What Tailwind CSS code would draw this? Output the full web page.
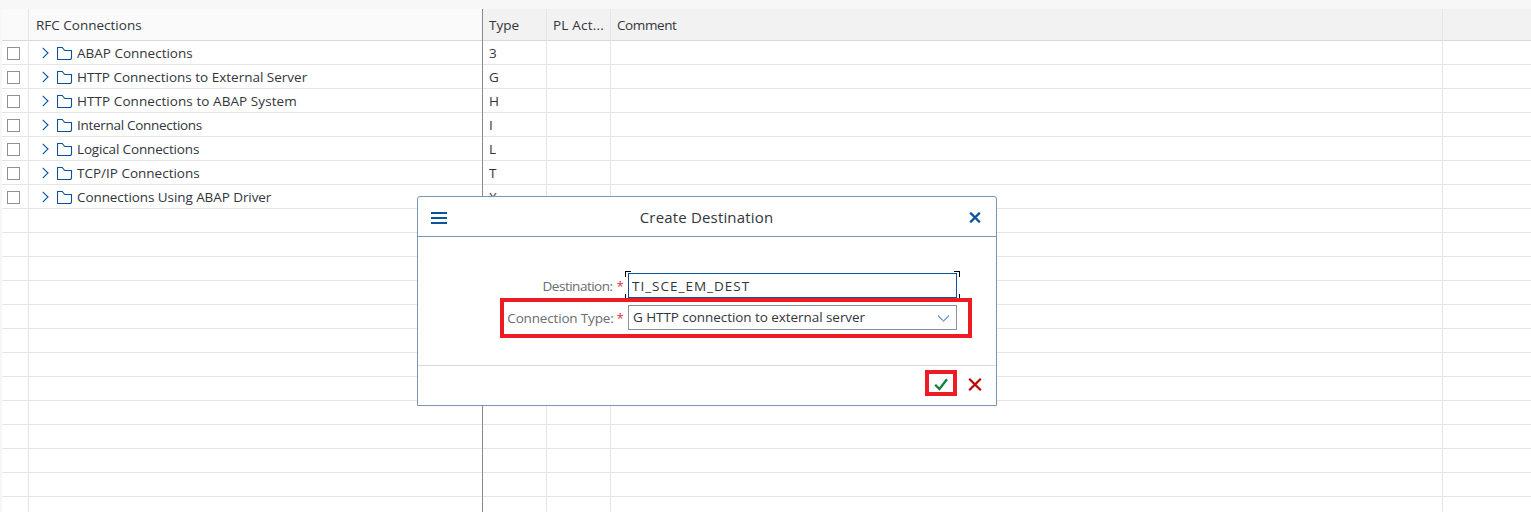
<!DOCTYPE html>
<html lang="en">
<head>
<meta charset="utf-8">
<title>RFC Connections</title>
<script src="https://cdn.jsdelivr.net/npm/@tailwindcss/browser@4"></script>
</head>
<body class="h-[512px] w-[1531px] overflow-hidden bg-[#f7f7f7] font-['Open_Sans',sans-serif] text-[13.5px] text-[#32363a]">
<svg class="hidden">
  <symbol id="chev" viewBox="0 0 8 12"><path d="M1.7 .8 7 6 1.7 11.2" fill="none" stroke="#0854a0" stroke-width="1.1"/></symbol>
  <symbol id="folder" viewBox="0 0 16 14"><path d="M.5 12.5V.5H5.2L7.7 3.5H14.5V11.5L13.5 12.5Z" fill="none" stroke="#0854a0" stroke-width="1.1"/></symbol>
</svg>
<main class="relative h-[512px] overflow-hidden pt-[9px] pl-[2px]">
  <div class="grid h-[32px] grid-cols-[27px_454px_64px_64px_832px_1fr] grid-rows-[32px] bg-[#f2f2f2] leading-[32px] *:shadow-[inset_0_-1px_#d9d9d9]">
    <div class="border-r border-[#e5e5e5] bg-[#fafafa]"></div>
    <div class="border-r border-[#8a8a8a] bg-[#fafafa] pl-[7px]"><span>RFC Connections</span></div>
    <div class="border-r border-[#e5e5e5] pl-[6px]"><span>Type</span></div>
    <div class="border-r border-[#e5e5e5] pl-[6px] tracking-[0.2px] whitespace-nowrap"><span>PL Act...</span></div>
    <div class="border-r border-[#e5e5e5] pl-[6px] tracking-[-0.4px]"><span>Comment</span></div>
    <div></div>
  </div>
  <div id="rows"></div>

  <section class="absolute top-[196px] left-[417px] flex h-[210px] w-[580px] flex-col rounded-t-[3px] border border-[#7996b4] bg-white">
    <header class="flex h-[40px] items-center border-b border-[#7996b4] pr-[15px] pl-[13px]">
      <svg class="mt-[3px] h-[12px] w-[16px]" viewBox="0 0 16 12" fill="#0854a0" shape-rendering="crispEdges"><path d="M0 0H16V2H0ZM0 5H16V7H0ZM0 10H16V12H0Z"/></svg>
      <h1 class="flex-1 pr-[3px] text-center text-[15px] leading-[40px] tracking-[0.17px]"><span>Create Destination</span></h1>
      <svg class="mt-[2px] h-[11px] w-[12px]" viewBox="0 0 12 11"><path d="M1.2.7 10.8 10.3M10.8.7 1.2 10.3" stroke="#0854a0" stroke-width="2.3"/></svg>
    </header>
    <div class="h-[129px] border-b border-[#d9d9d9] pt-[36px]">
      <div class="flex h-[25px]">
        <div class="flex w-[210px] justify-end pr-[4px] leading-[26px] text-[#6a6d70]"><span class="tracking-[-0.5px]">Destination:</span><span class="ml-[4px] text-[#d9363e]">*</span></div>
        <div class="relative w-[329px] border border-[#0854a0] pl-[3px] leading-[24px]"><span class="tracking-[1px]">TI_SCE_EM_DEST</span>
          <i class="absolute -top-[3px] -left-[4px] h-[6px] w-[6px] border-t border-l border-black"></i>
          <i class="absolute -top-[3px] -right-[4px] h-[6px] w-[6px] border-t border-r border-black"></i>
          <i class="absolute -bottom-[3px] -left-[4px] h-[6px] w-[6px] border-b border-l border-black"></i>
          <i class="absolute -right-[4px] -bottom-[3px] h-[6px] w-[6px] border-r border-b border-black"></i>
        </div>
      </div>
      <div class="mt-[7px] flex h-[25px]">
        <div class="flex w-[210px] justify-end pr-[4px] leading-[26px] text-[#6a6d70]"><span class="tracking-[-0.17px]">Connection Type:</span><span class="ml-[3px] text-[#d9363e]">*</span></div>
        <div class="flex w-[329px] items-center justify-between border border-[#89919a] pr-[6px] pl-[4px] leading-[23px]"><span class="tracking-[-0.06px]">G HTTP connection to external server</span>
          <svg class="mt-[1px] h-[7px] w-[13px]" viewBox="0 0 13 7"><path d="M1 .6 6.5 6 12 .6" fill="none" stroke="#0854a0" stroke-width="1"/></svg>
        </div>
      </div>
    </div>
    <footer class="flex flex-1 items-center justify-end gap-[19px] pr-[14px] pb-[2px]">
      <svg class="h-[13px] w-[15px]" viewBox="0 0 15 13"><path d="M1.2 6.7 5.4 11 13 1.3" fill="none" stroke="#107e3e" stroke-width="2.3"/></svg>
      <svg class="h-[13px] w-[14px]" viewBox="0 0 14 13"><path d="M1.2 .8 12.8 12.2M12.8.8 1.2 12.2" stroke="#bb0000" stroke-width="2.2"/></svg>
    </footer>
  </section>
  <div class="absolute top-[298px] left-[500px] h-[40px] w-[472px] border-4 border-[#ed1c24]"></div>
  <div class="absolute top-[370px] left-[925px] h-[26px] w-[32px] border-4 border-[#ed1c24]"></div>
</main>
<script>
const data = [
  ["ABAP Connections","3",""],
  ["HTTP Connections to External Server","G",""],
  ["HTTP Connections to ABAP System","H","tracking-[0.07px]"],
  ["Internal Connections","I","tracking-[-0.3px]"],
  ["Logical Connections","L","tracking-[-0.15px]"],
  ["TCP/IP Connections","T",""],
  ["Connections Using ABAP Driver","X","tracking-[-0.08px]"]
];
let html = "";
for (let i = 0; i < 20; i++) {
  const d = data[i];
  html += `<div class="grid h-[24px] grid-cols-[27px_454px_64px_64px_832px_1fr] grid-rows-[24px] bg-white leading-[24px] *:shadow-[inset_0_-1px_#e5e5e5]">
    <div class="border-r border-[#e5e5e5] pt-[6px] pl-[5px]">${d ? '<div class="h-[13px] w-[13px] border border-[#89919a]"></div>' : ''}</div>
    <div class="flex border-r border-[#8a8a8a] pl-[12px] ${d ? d[2] : ''}">${d ? `<svg class="mt-[6px] h-[12px] w-[8px]"><use href="#chev"/></svg><svg class="mt-[6px] ml-[8px] h-[14px] w-[16px]"><use href="#folder"/></svg><span class="ml-[4px]">${d[0]}</span>` : ''}</div>
    <div class="border-r border-[#e5e5e5] pl-[6px]">${d ? d[1] : ''}</div>
    <div class="border-r border-[#e5e5e5]"></div>
    <div class="border-r border-[#e5e5e5]"></div>
    <div></div>
  </div>`;
}
document.getElementById("rows").innerHTML = html;
</script>
</body>
</html>
